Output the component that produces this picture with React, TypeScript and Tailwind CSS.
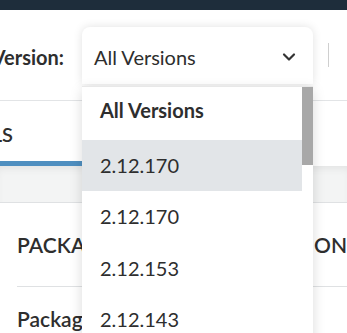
import { ChevronDown } from 'lucide-react'

const versions = ['2.12.170', '2.12.170', '2.12.153', '2.12.143']

export default function App() {
  return (
    <div className="relative w-[347px] h-[333px] overflow-hidden bg-white font-['Lato',sans-serif] text-[#2e2e2e]">
      {/* top bar */}
      <div className="h-[10px] bg-[#1e2d3b]" />

      {/* filter row */}
      <div className="h-[91px] flex items-center border-b border-[#e2e4e6]">
        <div className="w-[82px] shrink-0 flex justify-end pr-[18px] pt-[3px]">
          <span className="text-[20px] font-bold whitespace-nowrap">Version:</span>
        </div>
        <div className="w-[231px] h-[57px] mt-[1px] flex items-center justify-between pl-[12px] pr-[14px] pt-[3px] bg-white rounded-t-[8px] shadow-[0_0_10px_rgba(0,0,0,0.12)]">
          <span className="text-[20px]">All Versions</span>
          <ChevronDown size={20} strokeWidth={2.6} className="text-[#333]" />
        </div>
        <div className="ml-[15px] w-px h-[24px] bg-[#cfcfcf]" />
      </div>

      {/* tabs */}
      <div className="h-[65px] flex">
        <div className="w-[200px] flex flex-col justify-end">
          <div className="w-[13px] flex justify-end mb-[12px]">
            <span className="text-[20px] font-semibold whitespace-nowrap">DETAILS</span>
          </div>
          <div className="h-[5px] bg-[#4f8fc0]" />
        </div>
      </div>

      {/* grey band */}
      <div className="h-[37px] bg-[#f3f4f4] shadow-[inset_0_6px_8px_-4px_rgba(0,0,0,0.08)] border-b border-[#dfe1e3]" />

      {/* table */}
      <div className="pl-[17px]">
        <div className="h-[84px] flex items-center border-b border-[#dfe1e3]">
          <span className="w-[305px] text-[21px] font-semibold">PACKAGE</span>
          <span className="text-[21px] font-semibold">VERSION</span>
        </div>
        <div className="pt-[16px] text-[21px] font-semibold">Package</div>
      </div>

      {/* open dropdown list */}
      <div className="absolute left-[82px] top-[86px] w-[231px] h-[260px] flex bg-white shadow-[0_4px_12px_rgba(0,0,0,0.15)] border-t border-[#e8e8e8]">
        <div className="flex-1 flex flex-col">
          <div className="h-[55px] flex items-center pl-[18px] pb-[6px] text-[20px] font-bold">All Versions</div>
          {versions.map((v, i) => (
            <div
              key={i}
              className={`h-[54px] flex items-center pl-[18px] pb-[2px] text-[20px] ${i === 0 ? 'bg-[#e2e5e8]' : ''}`}
            >
              {v}
            </div>
          ))}
        </div>
        <div className="w-[11px]">
          <div className="h-[78px] bg-[#a8a8a8]" />
        </div>
      </div>
    </div>
  )
}
